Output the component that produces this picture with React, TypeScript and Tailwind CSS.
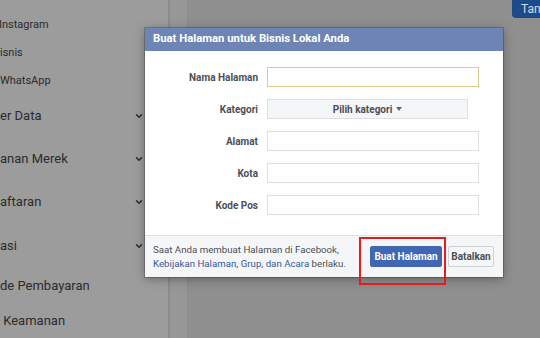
import { ChevronDown } from 'lucide-react';

const subItems = [
  { prefix: 'Grup Aset Bis', text: 'al', h: 'h-[28px]', pad: 'pl-[0px]' },
  { prefix: 'Akun I', text: 'nstagram', h: 'h-[28px]', pad: 'pl-[2px]' },
  { prefix: 'Lini B', text: 'isnis', h: 'h-[28px]', pad: 'pl-[0px]' },
  { prefix: 'Akun ', text: 'WhatsApp', h: 'h-[28px]', pad: 'pl-[0px]' },
];

const mainItems = [
  { prefix: 'Sumb', text: 'er Data', chevron: true, h: 'h-[42px]' },
  { prefix: 'Keam', text: 'anan Merek', chevron: true, h: 'h-[43px]' },
  { prefix: 'Pend', text: 'aftaran', chevron: true, h: 'h-[44px]' },
  { prefix: 'Integr', text: 'asi', chevron: true, h: 'h-[43px]' },
  { prefix: 'Meto', text: 'de Pembayaran', chevron: false, h: 'h-[38px]' },
  { prefix: 'Pusat', text: ' Keamanan', chevron: false, h: 'h-[32px]' },
];

const fields = ['Alamat', 'Kota', 'Kode Pos'];

function Sidebar() {
  return (
    <div className="w-[170px] shrink-0 h-full overflow-hidden bg-[#9c9c9c] border-r-2 border-[#8b8b8b] text-[#2b2b2b]">
      <div className="-mt-[17px] flex flex-col">
        {subItems.map((item) => (
          <div key={item.text} className={`${item.h} ${item.pad} flex items-center text-[11px] whitespace-nowrap`}>
            <span className="w-0 flex justify-end">{item.prefix}</span>
            <span>{item.text}</span>
          </div>
        ))}
        {mainItems.map((item) => (
          <div key={item.text} className={`${item.h} flex items-center pr-[24px] text-[13px] whitespace-nowrap`}>
            <span className="w-0 flex justify-end">{item.prefix}</span>
            <span className="whitespace-pre">{item.text}</span>
            {item.chevron && <ChevronDown size={10} strokeWidth={3.5} className="ml-auto text-[#2b2b2b]" />}
          </div>
        ))}
      </div>
    </div>
  );
}

function Dialog() {
  return (
    <div className="absolute left-[145px] top-[28px] w-[358px] bg-white shadow-[0_2px_10px_rgba(0,0,0,0.35)] ring-1 ring-black/20">
      <div className="h-[23px] bg-[#6d84b4] flex items-center pl-[8px] text-[11.3px] font-bold text-white">
        Buat Halaman untuk Bisnis Lokal Anda
      </div>

      <div className="pt-[16px] pb-[20px] flex flex-col gap-[12px]">
        <div className="flex items-center h-[20px]">
          <label className="w-[113px] text-right text-[10px] font-bold text-[#4b4f56]">Nama Halaman</label>
          <input className="ml-[9px] w-[212px] h-[20px] border border-[#d9cc92] outline-none" />
        </div>
        <div className="flex items-center h-[20px]">
          <label className="w-[113px] text-right text-[10px] font-bold text-[#4b4f56]">Kategori</label>
          <button className="ml-[9px] w-[201px] h-[20px] border border-[#dddfe2] bg-[#f5f6f7] flex items-center justify-center gap-[4px] text-[10px] font-bold text-[#4b4f56]">
            Pilih kategori
            <span className="w-0 h-0 border-l-[3.5px] border-r-[3.5px] border-t-[4px] border-l-transparent border-r-transparent border-t-[#606770]" />
          </button>
        </div>
        {fields.map((f) => (
          <div key={f} className="flex items-center h-[20px]">
            <label className="w-[113px] text-right text-[10px] font-bold text-[#4b4f56]">{f}</label>
            <input className="ml-[9px] w-[212px] h-[20px] border border-[#dddfe2] outline-none" />
          </div>
        ))}
      </div>

      <div className="h-[42px] bg-[#f5f6f7] border-t border-[#dddfe2] flex items-center pl-[8px] pr-[9px]">
        <p className="text-[9.7px] leading-[14px] text-[#4b4f56]">
          Saat Anda membuat Halaman di Facebook,
          <br />
          <span className="text-[#365899]">Kebijakan Halaman</span>,{' '}
          <span className="text-[#365899]">Grup</span>,{' '}
          <span className="text-[#365899]">dan Acara</span> berlaku.
        </p>
        <div className="ml-auto flex gap-[6px]">
          <button className="w-[72px] h-[21px] bg-[#4267b2] border border-[#4267b2] rounded-[2px] text-[10px] font-bold text-white">
            Buat Halaman
          </button>
          <button className="w-[46px] h-[21px] bg-[#f6f7f9] border border-[#ced0d4] rounded-[2px] text-[10px] font-bold text-[#4b4f56]">
            Batalkan
          </button>
        </div>
      </div>
    </div>
  );
}

export default function App() {
  return (
    <div
      className="relative w-[540px] h-[338px] flex overflow-hidden"
      style={{ fontFamily: 'Roboto, "Liberation Sans", sans-serif' }}
    >
      <Sidebar />
      <div className="flex-1 flex">
        <div className="w-[18px] bg-[#979797] border-r border-[#8c8c8c]" />
        <div className="flex-1 bg-[#8f8f8f] flex justify-end items-start">
          <div className="w-[28px] h-[19px] -mt-[1px] bg-[#1c4b8c] rounded-bl-[4px] flex items-center pl-[9px] text-[12px] text-[#d8dce4] overflow-hidden whitespace-nowrap">
            Tambah
          </div>
        </div>
      </div>

      <Dialog />

      {/* annotation box */}
      <div className="absolute left-[359px] top-[237px] w-[87px] h-[48px] border-2 border-[#e01e1e]" />
    </div>
  );
}
